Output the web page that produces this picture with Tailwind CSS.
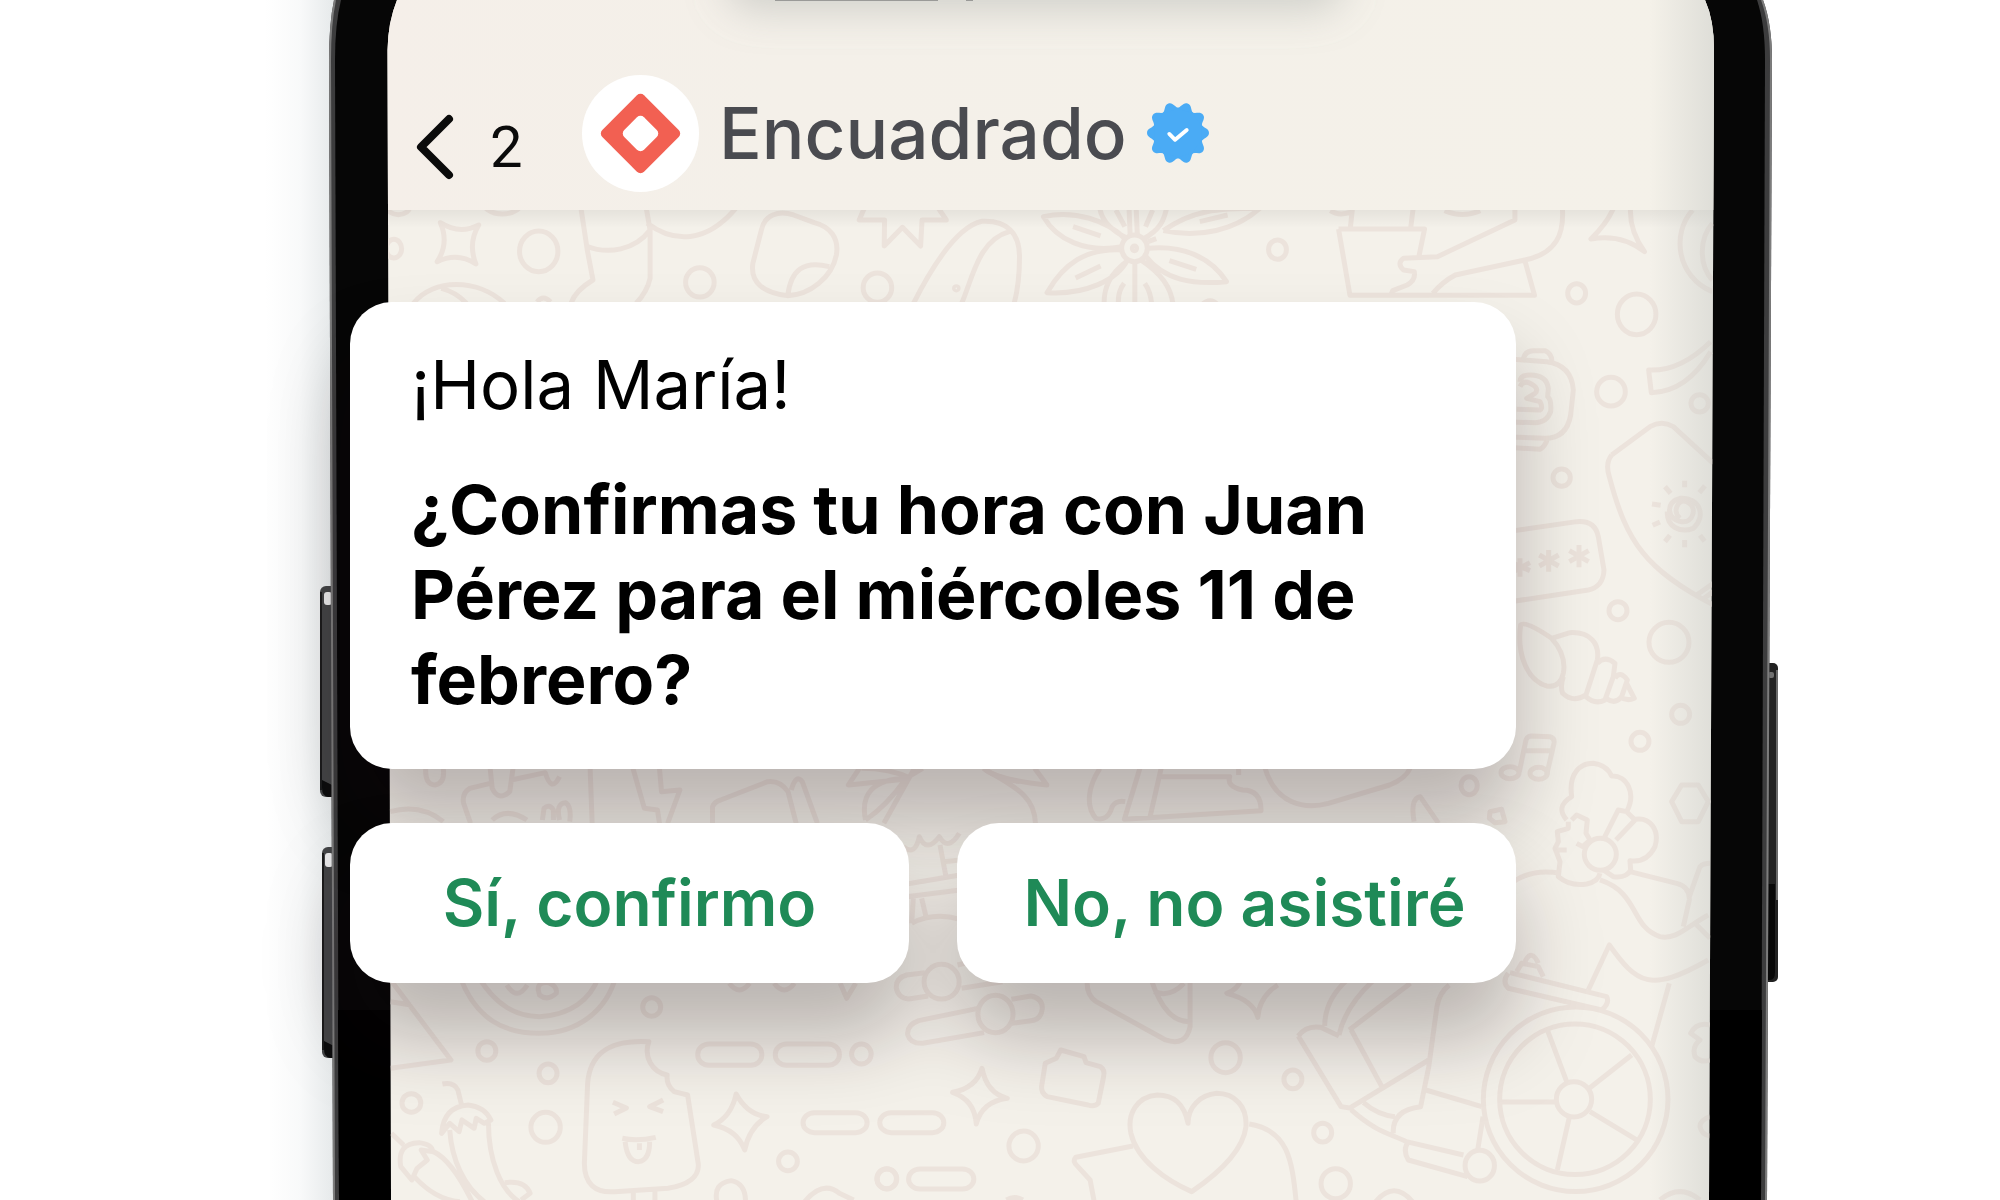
<!DOCTYPE html>
<html lang="es">
<head>
  <meta charset="UTF-8" />
  <meta name="viewport" content="width=device-width, initial-scale=1.0" />
  <title>Encuadrado – Confirmación de hora</title>

  <!-- Tailwind CSS -->
  <script src="https://cdn.jsdelivr.net/npm/@tailwindcss/browser@4"></script>
</head>
<body class="bg-white text-black font-['Inter',sans-serif]">

  <main class="relative min-h-screen overflow-hidden">

    <!-- Phone illustration -->
    <svg class="absolute inset-0 w-full h-full" viewBox="0 0 2000 1200" preserveAspectRatio="xMidYMin slice" aria-hidden="true">
      <defs>
        <clipPath id="screen">
          <path d="M391 1200L387.500 50Q388 22 397 0V-40H1705V0Q1714 20 1714 50L1709 1200Z" />
        </clipPath>
        <clipPath id="wallpaper">
          <path d="M380 210H1720V1200H380Z" />
        </clipPath>
        <linearGradient id="side" x1="0" x2="1" y1="0" y2="0">
          <stop offset="0" stop-color="#d3d9db" stop-opacity="0" />
          <stop offset="0.500" stop-color="#d3d9db" stop-opacity="0.150" />
          <stop offset="1" stop-color="#d3d9db" stop-opacity="0.600" />
        </linearGradient>
        <linearGradient id="inner" x1="0" x2="1" y1="0" y2="0">
          <stop offset="0" stop-color="#c9cbc7" stop-opacity="0" />
          <stop offset="1" stop-color="#c9cbc7" stop-opacity="0.500" />
        </linearGradient>
        <linearGradient id="under" x1="0" x2="0" y1="0" y2="1">
          <stop offset="0" stop-color="#000" stop-opacity="0.060" />
          <stop offset="1" stop-color="#000" stop-opacity="0" />
        </linearGradient>
        <linearGradient id="tint" x1="0" x2="1" y1="0" y2="0">
          <stop offset="0" stop-color="#f5efe9" />
          <stop offset="0.300" stop-color="#f4f0e9" />
          <stop offset="1" stop-color="#f4f1e9" />
        </linearGradient>
        <filter id="soft" x="-20%" y="-200%" width="140%" height="500%">
          <feGaussianBlur stdDeviation="20" />
        </filter>
      </defs>

      <path d="M265 0H336V1200H270Z" fill="url(#side)" />

      <!-- Side buttons -->
      <rect x="320" y="586" width="20" height="211" rx="6" fill="#434446" />
      <path d="M321 592V790" stroke="#1b1b1c" stroke-width="2" />
      <path d="M322 780L334 786V797H328Q322 796 322 788Z" fill="#0c0c0d" />
      <rect x="324" y="592" width="8" height="13" rx="3" fill="#e9e9ea" />
      <rect x="322" y="847" width="20" height="211" rx="6" fill="#434446" />
      <path d="M323 853V1050" stroke="#1b1b1c" stroke-width="2" />
      <path d="M324 1041L336 1047V1058H330Q324 1057 324 1049Z" fill="#0c0c0d" />
      <rect x="325" y="853" width="8" height="14" rx="3" fill="#e9e9ea" />
      <rect x="1760" y="663" width="18" height="319" rx="5" fill="#222" />
      <path d="M1777 670V900" stroke="#6a6a6a" stroke-width="2" />
      <rect x="1768" y="672" width="6" height="6" rx="2" fill="#707070" />
      <path d="M1767 884H1775V972Q1775 980 1770 980H1767Z" fill="#080808" />

      <!-- Frame -->
      <path d="M334 0Q329 24 329 60L333 1200H1767L1772 60Q1772 24 1763 0Z" fill="#3c3c3d" />
      <path d="M335 0Q330 24 330 60L334 1200M1762 0Q1771 24 1771 60L1766 1200" fill="none" stroke="#7c7c7c" stroke-width="2" />
      <path d="M341 0Q335 24 335 60L339 1200H1761L1765 60Q1765 24 1757 0Z" fill="#060606" />
      <path d="M338 1010H1762L1761 1200H339Z" fill="#000" />

      <!-- Screen -->
      <g clip-path="url(#screen)">
        <rect x="380" y="0" width="1340" height="1200" fill="#f4f1ea" />
        <rect x="380" y="0" width="1340" height="210" fill="url(#tint)" />

        <g clip-path="url(#wallpaper)">
          <g fill="none" stroke="#ece3dc" stroke-width="5" stroke-linejoin="round">
            <!-- Top strip -->
            <g transform="translate(380 200) scale(.408 .3333)">
              <path vector-effect="non-scaling-stroke" d="M148 68Q195 105 242 75Q215 130 235 192Q190 155 140 185Q170 130 148 68Z" />
              <ellipse vector-effect="non-scaling-stroke" cx="389" cy="154" rx="47" ry="61" />
              <ellipse vector-effect="non-scaling-stroke" cx="34" cy="146" rx="19" ry="28" />
              <ellipse vector-effect="non-scaling-stroke" cx="300" cy="0" rx="50" ry="42" />
              <ellipse vector-effect="non-scaling-stroke" cx="45" cy="20" rx="28" ry="24" />
              <path vector-effect="non-scaling-stroke" d="M82 310C130 235 240 235 305 310M150 265Q185 275 212 310M385 306Q400 282 418 306" />
              <path vector-effect="non-scaling-stroke" d="M492 20L508 150L522 240Q480 270 468 310M652 20L662 90V235Q655 275 628 310M505 138C560 165 625 150 662 90M655 70C720 130 800 130 872 25" />
              <ellipse vector-effect="non-scaling-stroke" cx="784" cy="247" rx="35" ry="44" />
            </g>
            <g transform="translate(700 0) scale(.357 .3333)">
              <path vector-effect="non-scaling-stroke" d="M172 690C180 645 220 630 262 645L320 668C365 680 390 715 382 765C370 830 310 885 245 887C180 878 140 850 148 790ZM246 885C255 810 290 780 362 800" />
              <path vector-effect="non-scaling-stroke" d="M460 625L446 660H517L516 738L567 682L618 738L622 660H690L668 625" />
              <ellipse vector-effect="non-scaling-stroke" cx="497" cy="863" rx="40" ry="44" />
              <path vector-effect="non-scaling-stroke" d="M598 910C650 800 720 680 790 664C860 660 895 700 895 770Q895 850 880 910M733 910C765 830 780 720 868 694" />
              <circle vector-effect="non-scaling-stroke" cx="718" cy="865" r="5" />
              <!-- Flower -->
              <ellipse vector-effect="non-scaling-stroke" cx="1217" cy="745" rx="36" ry="40" />
              <ellipse vector-effect="non-scaling-stroke" cx="1217" cy="745" rx="6" ry="7" />
              <path vector-effect="non-scaling-stroke" d="M1182 740C1080 760 1000 720 962 650C1050 630 1140 660 1192 718M1045 680L1122 708M1182 750C1080 745 1020 790 972 878C1080 885 1170 840 1198 778M1052 834L1122 798M1200 780C1150 820 1130 860 1132 915M1218 785V910M1188 850Q1170 875 1172 910M1235 780C1290 820 1320 860 1325 915M1246 850Q1262 875 1265 910M1248 768C1300 840 1380 855 1475 845C1430 770 1350 735 1255 745M1315 782L1390 808M1240 718C1290 690 1300 660 1308 620M1225 705L1222 630M1205 708L1202 630M1195 714C1150 690 1125 660 1120 625M1165 630L1190 680M1268 630L1248 680M1298 692C1380 630 1450 625 1568 625C1500 690 1400 715 1298 692M1400 665L1478 645M1255 725L1278 716" />
              <path vector-effect="non-scaling-stroke" d="M1405 915Q1430 890 1450 915" />
            </g>
            <g transform="translate(1250 0) scale(.357 .3333)">
              <ellipse vector-effect="non-scaling-stroke" cx="77" cy="749" rx="25" ry="29" />
              <ellipse vector-effect="non-scaling-stroke" cx="915" cy="880" rx="25" ry="29" />
              <ellipse vector-effect="non-scaling-stroke" cx="1083" cy="943" rx="54" ry="61" />
              <path vector-effect="non-scaling-stroke" d="M248 687H489L473 770M248 687L280 886H797L770 782M287 625L281 685M457 625L450 685M225 632Q250 650 285 635M545 632Q595 655 645 632M742 625V660L525 770L430 775Q410 790 430 810L460 815Q465 840 440 855L400 872L395 884M875 625C880 700 860 760 770 780L575 825Q540 845 512 880" />
              <path vector-effect="non-scaling-stroke" d="M1018 625Q1000 670 955 717Q1040 700 1105 755Q1062 690 1066 625M1240 630C1180 700 1195 830 1295 875M1295 670C1255 720 1260 800 1295 840" />
            </g>

            <!-- Right column -->
            <g transform="translate(1480 330) scale(.3333)">
              <circle vector-effect="non-scaling-stroke" cx="393" cy="185" r="43" />
              <circle vector-effect="non-scaling-stroke" cx="659" cy="220" r="26" />
              <circle vector-effect="non-scaling-stroke" cx="245" cy="443" r="26" />
              <circle vector-effect="non-scaling-stroke" cx="414" cy="842" r="27" />
              <circle vector-effect="non-scaling-stroke" cx="567" cy="937" r="60" />
              <path vector-effect="non-scaling-stroke" d="M692 35Q600 125 506 120L514 188Q620 185 692 65" />
              <path vector-effect="non-scaling-stroke" d="M60 85L200 95Q275 105 280 180L272 255Q260 325 195 325L60 320M130 88Q135 62 160 62H195Q215 70 216 95M60 350L180 358Q195 350 202 328M120 155Q120 135 150 135Q200 135 205 175L203 200Q215 210 212 245Q200 278 165 278L60 275M120 170Q130 150 150 160Q180 175 165 190L140 205L180 215Q190 235 180 240L110 238" />
              <path vector-effect="non-scaling-stroke" d="M395 375L510 290Q545 270 580 290L700 400M395 375Q375 400 388 440C440 640 500 720 700 825M650 795L700 760M668 808L700 785" />
              <path vector-effect="non-scaling-stroke" d="M614 452V472M555 470L572 490M516 522L542 526M518 586L540 576M555 635L570 616M614 630V652M674 634L660 616M675 468L658 488M600 565C575 545 595 505 620 515C655 530 640 580 605 575C560 570 555 515 600 505C660 500 680 560 640 595C600 610 560 590 562 545" />
              <path vector-effect="non-scaling-stroke" d="M60 608L290 575Q345 570 355 620L372 720Q370 770 325 780L60 820" />
              <path vector-effect="non-scaling-stroke" d="M206 660V725M178 675L236 708M178 708L236 675M297 645V712M268 662L326 695M268 695L326 662M120 685V740M95 698L150 722M95 728L150 698" />
              <path vector-effect="non-scaling-stroke" d="M122 885Q135 870 215 925Q260 975 250 1030Q240 1075 200 1068C140 1050 110 970 122 885ZM215 925L270 908C330 905 360 940 352 990L318 1095Q280 1120 248 1090Q240 1070 250 1040M352 1000Q375 975 405 1000L400 1040L375 1110Q345 1125 318 1100M405 1045Q420 1020 442 1050L425 1100Q405 1125 378 1105M440 1060L463 1105Q440 1115 420 1100" />
            </g>
            <g transform="translate(1480 680) scale(.3333)">
              <circle vector-effect="non-scaling-stroke" cx="602" cy="103" r="27" />
              <circle vector-effect="non-scaling-stroke" cx="480" cy="184" r="27" />
              <path vector-effect="non-scaling-stroke" d="M118 275L138 180Q142 168 155 168L210 170Q225 175 222 190L200 285M130 212H215" />
              <ellipse vector-effect="non-scaling-stroke" cx="90" cy="278" rx="27" ry="18" />
              <ellipse vector-effect="non-scaling-stroke" cx="176" cy="280" rx="26" ry="18" />
              <path vector-effect="non-scaling-stroke" d="M30 395L65 388L75 425L45 428L28 415ZM605 315H655L685 365L655 425H605L575 365Z" />
              <path vector-effect="non-scaling-stroke" d="M260 420Q225 380 275 350C265 280 300 250 340 250Q380 255 395 288C440 285 470 340 440 395L415 390L372 475M275 420L290 405L322 420L318 460L330 480L308 500L290 490M265 425V445L232 455L235 485L225 505L240 545L235 590Q270 620 320 612Q355 605 360 580M230 510H260M440 395L465 420L408 480M465 418C510 410 540 450 525 500Q500 550 450 542L452 570Q440 595 400 590L370 570" />
              <circle vector-effect="non-scaling-stroke" cx="361" cy="523" r="48" />
              <path vector-effect="non-scaling-stroke" d="M100 605Q160 565 240 580M360 600C480 640 450 740 540 770C590 780 620 740 685 705M450 575L590 610Q630 620 628 660L610 740M628 650L660 560Q670 550 690 550M645 730L690 775M325 930L388 795C470 910 510 940 685 840M568 910L515 1100" />
              <path vector-effect="non-scaling-stroke" d="M85 880Q65 905 85 925L365 990Q390 970 380 950L90 878M110 875L125 850L175 860L190 890M135 845Q155 805 175 850" />
              <circle vector-effect="non-scaling-stroke" cx="287" cy="1258" r="277" />
              <circle vector-effect="non-scaling-stroke" cx="285" cy="1258" r="226" />
              <circle vector-effect="non-scaling-stroke" cx="282" cy="1258" r="53" />
              <path vector-effect="non-scaling-stroke" d="M202 1050L260 1205M455 1125L328 1225M470 1380L330 1295M232 1470L268 1312M60 1266H228" />
              <path vector-effect="non-scaling-stroke" d="M690 1035Q650 1025 632 1060L660 1080Q635 1100 645 1130Q665 1150 690 1140M690 1310Q660 1320 660 1340Q665 1365 690 1368M540 1560Q600 1510 660 1560" />
            </g>

            <!-- Bottom left -->
            <g transform="translate(260 960) scale(.408 .3333)">
              <path vector-effect="non-scaling-stroke" d="M320 60L468 300L320 325M320 125L370 135M490 50C530 180 600 220 685 220C780 220 850 150 872 50M535 50C580 140 630 170 685 170C760 165 810 120 830 50M605 75Q630 125 655 75M682 90Q680 65 708 68Q730 80 726 100Q705 125 685 105ZM1150 70Q1175 110 1200 70M1260 70Q1285 110 1310 70M1422 70L1438 115L1460 70" />
              <ellipse vector-effect="non-scaling-stroke" cx="960" cy="141" rx="22" ry="28" />
              <ellipse vector-effect="non-scaling-stroke" cx="556" cy="273" rx="22" ry="28" />
              <ellipse vector-effect="non-scaling-stroke" cx="706" cy="340" rx="22" ry="28" />
              <ellipse vector-effect="non-scaling-stroke" cx="371" cy="429" rx="23" ry="28" />
              <ellipse vector-effect="non-scaling-stroke" cx="700" cy="502" rx="36" ry="45" />
              <ellipse vector-effect="non-scaling-stroke" cx="1474" cy="282" rx="24" ry="30" />
              <ellipse vector-effect="non-scaling-stroke" cx="1294" cy="604" rx="23" ry="28" />
              <ellipse vector-effect="non-scaling-stroke" cx="1536" cy="656" rx="24" ry="30" />
              <rect vector-effect="non-scaling-stroke" x="1073" y="252" width="157" height="64" rx="28" ry="30" />
              <rect vector-effect="non-scaling-stroke" x="1263" y="252" width="157" height="64" rx="28" ry="30" />
              <rect vector-effect="non-scaling-stroke" x="1331" y="458" width="157" height="60" rx="28" ry="30" />
              <rect vector-effect="non-scaling-stroke" x="1519" y="458" width="157" height="60" rx="28" ry="30" />
              <path vector-effect="non-scaling-stroke" d="M953 245C880 240 810 260 803 370L795 610C795 670 820 700 870 695L1000 685C1050 675 1078 650 1074 610L1048 405L1015 395Q995 375 998 345C960 335 940 290 953 245ZM915 695V725M968 690V725" />
              <path vector-effect="non-scaling-stroke" d="M865 427L898 444L868 462M988 420L955 440L988 455M888 535Q925 545 970 532M895 545Q900 605 928 605Q955 600 955 545M930 550V570" />
              <path vector-effect="non-scaling-stroke" d="M1167 402Q1195 465 1243 470Q1200 500 1188 570Q1170 510 1112 495Q1155 470 1167 402Z" />
              <path vector-effect="non-scaling-stroke" d="M447 372Q475 365 485 390L494 435M445 520Q450 440 510 435Q550 440 566 480L550 490L530 475L525 505L495 480L488 515L465 490ZM465 510C470 600 500 680 550 725M560 490C560 600 590 690 635 725M600 668Q650 660 662 700L640 720M322 520L352 555M345 620Q335 550 390 548Q425 555 422 575L395 570L410 600L385 625L372 660ZM378 650Q430 720 490 725M425 575Q470 600 520 725" />
              <path vector-effect="non-scaling-stroke" d="M1120 725Q1110 670 1155 662Q1190 670 1190 725M1335 725Q1380 660 1420 700L1455 720" />
            </g>

            <!-- Bottom middle -->
            <g transform="translate(880 960) scale(.408 .3333)">
              <ellipse vector-effect="non-scaling-stroke" cx="151" cy="65" rx="43" ry="52" />
              <ellipse vector-effect="non-scaling-stroke" cx="283" cy="162" rx="43" ry="56" />
              <path vector-effect="non-scaling-stroke" d="M110 38L65 45Q38 55 40 85Q45 115 70 117L118 108M190 15L240 0M200 85L300 65M240 145L95 182Q65 195 68 225Q75 252 105 250L255 218M322 118L370 108Q398 115 398 145Q395 180 370 182L322 190" />
              <path vector-effect="non-scaling-stroke" d="M508 60Q505 105 530 125L700 240Q750 260 760 200V60M665 60C690 150 720 185 758 185M672 95Q710 115 745 70" />
              <path vector-effect="non-scaling-stroke" d="M885 60Q875 90 850 100Q915 120 926 172Q930 110 975 75" />
              <path vector-effect="non-scaling-stroke" d="M250 325Q262 400 312 415Q250 425 236 492Q232 420 178 397Q235 385 250 325Z" />
              <path vector-effect="non-scaling-stroke" d="M443 270L500 290L505 308L540 320Q552 330 548 350L535 430Q525 442 510 435L410 410Q395 400 396 380L405 310L432 295Z" />
              <ellipse vector-effect="non-scaling-stroke" cx="847" cy="293" rx="36" ry="45" />
              <ellipse vector-effect="non-scaling-stroke" cx="1012" cy="358" rx="22" ry="28" />
              <ellipse vector-effect="non-scaling-stroke" cx="352" cy="558" rx="36" ry="45" />
              <ellipse vector-effect="non-scaling-stroke" cx="1085" cy="518" rx="22" ry="28" />
              <ellipse vector-effect="non-scaling-stroke" cx="1117" cy="671" rx="36" ry="45" />
              <ellipse vector-effect="non-scaling-stroke" cx="17" cy="657" rx="24" ry="30" />
              <rect vector-effect="non-scaling-stroke" x="70" y="627" width="160" height="60" rx="28" ry="30" />
              <path vector-effect="non-scaling-stroke" d="M755 490C745 430 720 405 680 405C630 410 605 460 615 520C630 600 700 660 764 695C830 640 890 570 897 500C900 440 870 400 825 400C785 405 755 440 755 490ZM620 558L480 592Q470 605 485 620L515 660L525 725M905 492C1000 510 1010 600 1020 725M1215 725Q1260 660 1305 725M310 720Q330 705 350 720" />
              <path vector-effect="non-scaling-stroke" d="M1145 60Q1090 120 1090 198M1210 60Q1140 140 1125 225M1300 70L1150 210M1025 228Q1045 195 1080 202L1125 228M1025 228L1130 440L1155 445M1155 210L1230 380M1150 445L1345 300M1395 75Q1370 100 1365 140L1345 320L1325 440Q1255 450 1258 520M1185 428Q1220 465 1262 470M1155 450C1220 520 1250 520 1290 545L1430 585M1338 390L1475 440M1295 545Q1280 570 1295 600L1440 650M1478 470L1465 570" />
              <ellipse vector-effect="non-scaling-stroke" cx="1470" cy="617" rx="36" ry="46" />
            </g>

            <!-- Between the message and the replies -->
            <g transform="translate(380 740) scale(.408 .3333)">
              <path vector-effect="non-scaling-stroke" d="M112 85Q110 135 135 135Q160 130 155 85M270 85L275 145Q290 185 318 155L326 85M270 130L220 145Q200 160 205 190L222 250M322 120L405 98Q420 160 440 110M515 85L520 250M275 240Q310 200 360 240M398 240L402 205Q415 190 425 210V240M440 240Q430 190 455 188Q470 200 465 245M25 215Q100 190 155 245M620 85L648 205L680 210L685 250M685 85L690 155L735 150L705 250" />
              <path vector-effect="non-scaling-stroke" d="M815 250V200Q820 185 835 180L950 125Q980 120 1000 155L1020 250M1008 150Q1020 100 1035 125L1072 250M1175 85L1148 135L1285 118L1330 85M1180 85Q1250 85 1300 115M1190 240Q1170 120 1290 115Q1240 200 1190 240M1310 85L1235 250M1480 85Q1500 110 1568 125" />
            </g>
            <g transform="translate(900 740) scale(.408 .3333)">
              <path vector-effect="non-scaling-stroke" d="M205 85Q240 120 360 135L330 85M210 90C300 150 330 180 332 250M490 85C460 140 455 200 480 235Q510 245 520 200Q530 180 552 185M588 85L550 238L885 212Q885 150 840 150Q800 140 808 110H640M640 85L612 235M830 85V105M895 85C920 190 990 210 1050 190L1200 135Q1240 115 1250 85M1260 245Q1250 175 1275 170L1320 250" />
              <ellipse vector-effect="non-scaling-stroke" cx="1395" cy="137" rx="20" ry="27" />
            </g>
            <g transform="translate(840 820) scale(.3333)">
              <path vector-effect="non-scaling-stroke" d="M190 80Q225 110 238 50Q260 100 298 50Q325 95 358 40M300 75L318 170M310 125L360 120M200 192L360 165M200 230L360 210M215 310L220 235M245 235L258 290M215 310Q280 275 360 298" />
            </g>
          </g>
          <rect x="380" y="210" width="1340" height="18" fill="url(#under)" />
        </g>

        <!-- Notch shade -->
        <rect x="725" y="-60" width="620" height="70" rx="30" fill="#8d938f" fill-opacity="0.350" filter="url(#soft)" />
        <path d="M775 0H938M966 0H973" stroke="#9a9a98" stroke-width="2" />
        <rect x="1650" y="0" width="64" height="1200" fill="url(#inner)" />
      </g>
    </svg>

    <!-- Chat header -->
    <header class="relative flex items-center h-[210px] pt-14 pl-[20.8%]">
      <a href="#" class="flex items-center gap-9 w-[166px] mt-7 font-['Roboto',sans-serif] text-[58px] leading-none text-[#0b0b0b]" aria-label="Volver, 2 chats">
        <svg class="w-[38px] h-[66px]" viewBox="0 0 38 66" fill="none" stroke="#0b0b0b" stroke-width="8" stroke-linecap="round" stroke-linejoin="round" aria-hidden="true">
          <path d="M33 5L5 33L33 61" />
        </svg>
        <span>2</span>
      </a>
      <svg class="w-[117px] h-[117px] shrink-0" viewBox="0 0 117 117" aria-hidden="true">
        <circle cx="58.500" cy="58.500" r="58.500" fill="#fff" />
        <rect x="29" y="29" width="59" height="59" rx="5" fill="#f26052" transform="rotate(45 58.500 58.500)" />
        <rect x="44.500" y="44.500" width="28" height="28" rx="5" fill="#fff" transform="rotate(45 58.500 58.500)" />
      </svg>
      <h1 class="ml-5 text-[71px] leading-none font-medium text-[#4a4b50]">Encuadrado</h1>
      <svg class="ml-5 w-[62px] h-[64px]" viewBox="0 0 64 64" role="img" aria-label="Cuenta verificada">
        <g fill="#4aabf5">
          <circle cx="32" cy="32" r="26" />
          <path d="M23 8C27 6 27 0 32 0C37 0 37 6 41 8Z" transform="rotate(18 32 32)" />
          <path d="M23 8C27 6 27 0 32 0C37 0 37 6 41 8Z" transform="rotate(54 32 32)" />
          <path d="M23 8C27 6 27 0 32 0C37 0 37 6 41 8Z" transform="rotate(90 32 32)" />
          <path d="M23 8C27 6 27 0 32 0C37 0 37 6 41 8Z" transform="rotate(126 32 32)" />
          <path d="M23 8C27 6 27 0 32 0C37 0 37 6 41 8Z" transform="rotate(162 32 32)" />
          <path d="M23 8C27 6 27 0 32 0C37 0 37 6 41 8Z" transform="rotate(198 32 32)" />
          <path d="M23 8C27 6 27 0 32 0C37 0 37 6 41 8Z" transform="rotate(234 32 32)" />
          <path d="M23 8C27 6 27 0 32 0C37 0 37 6 41 8Z" transform="rotate(270 32 32)" />
          <path d="M23 8C27 6 27 0 32 0C37 0 37 6 41 8Z" transform="rotate(306 32 32)" />
          <path d="M23 8C27 6 27 0 32 0C37 0 37 6 41 8Z" transform="rotate(342 32 32)" />
        </g>
        <path d="M23 33L29 39L41 29" fill="none" stroke="#fff" stroke-width="4" stroke-linecap="round" stroke-linejoin="round" />
      </svg>
    </header>

    <!-- Message -->
    <section class="relative w-[58.3%] ml-[17.5%] mt-[92px]">
      <div class="min-h-[467px] pl-[61px] pt-10 bg-white rounded-[42px] shadow-[0_55px_80px_rgba(18,4,12,0.26)]">
        <p class="text-[67px] leading-[85px]">¡Hola María!</p>
        <p class="mt-10 text-[68px] leading-[85px] font-bold">¿Confirmas tu hora con Juan<br />Pérez para el miércoles 11 de<br />febrero?</p>
      </div>

      <!-- Quick replies -->
      <div class="grid grid-cols-2 gap-12 mt-[54px] drop-shadow-[0_55px_40px_rgba(18,4,12,0.26)]">
        <button type="button" class="h-[160px] bg-white rounded-[42px] text-[64px] font-semibold text-[#1f8a57]">Sí, confirmo</button>
        <button type="button" class="h-[160px] pl-4 bg-white rounded-[42px] text-[64px] font-semibold text-[#1f8a57] whitespace-nowrap">No, no asistiré</button>
      </div>
    </section>

  </main>

</body>
</html>
